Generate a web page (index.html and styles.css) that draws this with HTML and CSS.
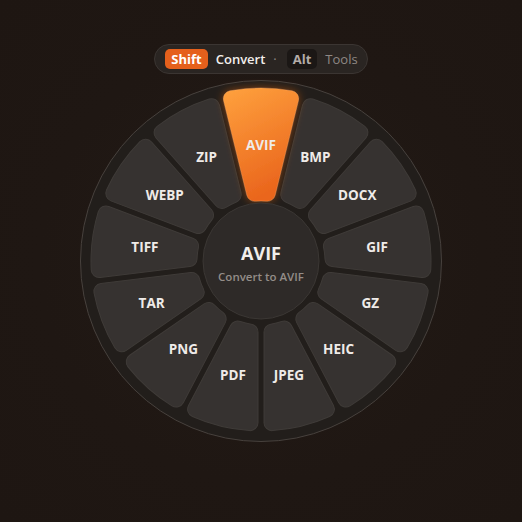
FILE: index.html
```html
<!DOCTYPE html>
<html>
<head>
<meta charset="utf-8">
<link rel="stylesheet" href="styles.css">
</head>
<body>
<div class="page">
  <div class="bar">
    <span class="key key-shift">Shift</span>
    <span class="mode">Convert</span>
    <span class="sep">·</span>
    <span class="key key-alt">Alt</span>
    <span class="tools">Tools</span>
  </div>
  <svg class="wheel" width="364" height="364" viewBox="-182 -182 364 364">
    <defs>
      <path id="seg" d="M -29.38 -167.44 A 170 170 0 0 1 29.38 -167.44 A 8 8 0 0 1 35.77 -157.65 L 14.12 -69.81 A 8 8 0 0 1 5.64 -63.75 A 64 64 0 0 0 -5.64 -63.75 A 8 8 0 0 1 -14.12 -69.81 L -35.77 -157.65 A 8 8 0 0 1 -29.38 -167.44 Z"/>
      <linearGradient id="orange" x1="0" y1="0" x2="0.35" y2="1">
        <stop offset="0" stop-color="#ffa23e"/>
        <stop offset="1" stop-color="#ea661d"/>
      </linearGradient>
      <filter id="glow" x="-50%" y="-50%" width="200%" height="200%">
        <feDropShadow dx="0" dy="0" stdDeviation="4" flood-color="#ff6a10" flood-opacity="0.45"/>
      </filter>
    </defs>
    <circle class="ring" cx="0" cy="0" r="180.5"/>
    <g class="segs">
      <use href="#seg" transform="rotate(27.692)"/>
      <use href="#seg" transform="rotate(55.385)"/>
      <use href="#seg" transform="rotate(83.077)"/>
      <use href="#seg" transform="rotate(110.769)"/>
      <use href="#seg" transform="rotate(138.462)"/>
      <use href="#seg" transform="rotate(166.154)"/>
      <use href="#seg" transform="rotate(193.846)"/>
      <use href="#seg" transform="rotate(221.538)"/>
      <use href="#seg" transform="rotate(249.231)"/>
      <use href="#seg" transform="rotate(276.923)"/>
      <use href="#seg" transform="rotate(304.615)"/>
      <use href="#seg" transform="rotate(332.308)"/>
    </g>
    <path class="active" filter="url(#glow)" d="M -31.14 -170.17 A 173 173 0 0 1 31.14 -170.17 A 8 8 0 0 1 37.47 -160.39 L 14.16 -65.78 A 8 8 0 0 1 5.64 -59.73 A 60 60 0 0 0 -5.64 -59.73 A 8 8 0 0 1 -14.16 -65.78 L -37.47 -160.39 A 8 8 0 0 1 -31.14 -170.17 Z"/>
    <circle class="hub" cx="0" cy="0" r="58"/>
    <g class="labels">
      <text x="0" y="-116">AVIF</text>
      <text x="54.4" y="-103.6">BMP</text>
      <text x="96.3" y="-66.5">DOCX</text>
      <text x="116.1" y="-14.1">GIF</text>
      <text x="109.4" y="41.5">GZ</text>
      <text x="77.6" y="87.6">HEIC</text>
      <text x="28" y="113.6">JPEG</text>
      <text x="-28" y="113.6">PDF</text>
      <text x="-77.6" y="87.6">PNG</text>
      <text x="-109.4" y="41.5">TAR</text>
      <text x="-116.1" y="-14.1">TIFF</text>
      <text x="-96.3" y="-66.5">WEBP</text>
      <text x="-54.4" y="-103.6">ZIP</text>
    </g>
    <text class="hub-title" x="0" y="-8">AVIF</text>
    <text class="hub-sub" x="0" y="15">Convert to AVIF</text>
  </svg>
</div>
</body>
</html>
```

FILE: styles.css
```css
html, body {
  margin: 0;
  padding: 0;
}
body {
  background: radial-gradient(circle at 50% 50%, #231b16 0%, #1f1713 60%, #1e1612 100%);
  font-family: "Open Sans", "Noto Sans", sans-serif;
}
.page {
  width: 522px;
  height: 522px;
  box-sizing: border-box;
  padding-top: 44px;
  display: flex;
  flex-direction: column;
  align-items: center;
  gap: 5px;
}
.bar {
  display: flex;
  align-items: center;
  gap: 8px;
  height: 30px;
  box-sizing: border-box;
  padding: 0 9px 0 10px;
  border-radius: 15px;
  background: #2a2522;
  border: 1px solid #3b3532;
}
.key {
  height: 20px;
  line-height: 20px;
  padding: 0 6px;
  border-radius: 5px;
  font-size: 13px;
  font-weight: 700;
}
.key-shift {
  background: #e5601c;
  color: #ffffff;
}
.key-alt {
  background: #1b1715;
  color: #b3aca8;
  margin-left: 2px;
}
.mode {
  font-size: 13px;
  font-weight: 600;
  color: #f3efec;
}
.sep {
  font-size: 13px;
  color: #8c8580;
}
.tools {
  font-size: 13px;
  font-weight: 500;
  color: #8f8884;
}
.wheel {
  display: block;
  overflow: visible;
}
.ring {
  fill: #221e1b;
  stroke: #47413d;
  stroke-width: 1;
}
.segs use {
  fill: #363230;
  stroke: #3f3b38;
  stroke-width: 1;
}
.active {
  fill: url(#orange);
  stroke: #ffb066;
  stroke-opacity: 0.35;
  stroke-width: 1;
}
.hub {
  fill: #2e2a28;
  stroke: #3b3734;
  stroke-width: 1;
}
.labels text {
  font-family: "Open Sans", "Noto Sans", sans-serif;
  font-size: 13.5px;
  font-weight: 700;
  fill: #efebe8;
  text-anchor: middle;
  dominant-baseline: central;
}
.hub-title {
  font-family: "Open Sans", "Noto Sans", sans-serif;
  font-size: 18px;
  font-weight: 700;
  fill: #f2eeeb;
  text-anchor: middle;
  dominant-baseline: central;
}
.hub-sub {
  font-family: "Open Sans", "Noto Sans", sans-serif;
  font-size: 11.5px;
  font-weight: 600;
  fill: #948d89;
  text-anchor: middle;
  dominant-baseline: central;
}
```
